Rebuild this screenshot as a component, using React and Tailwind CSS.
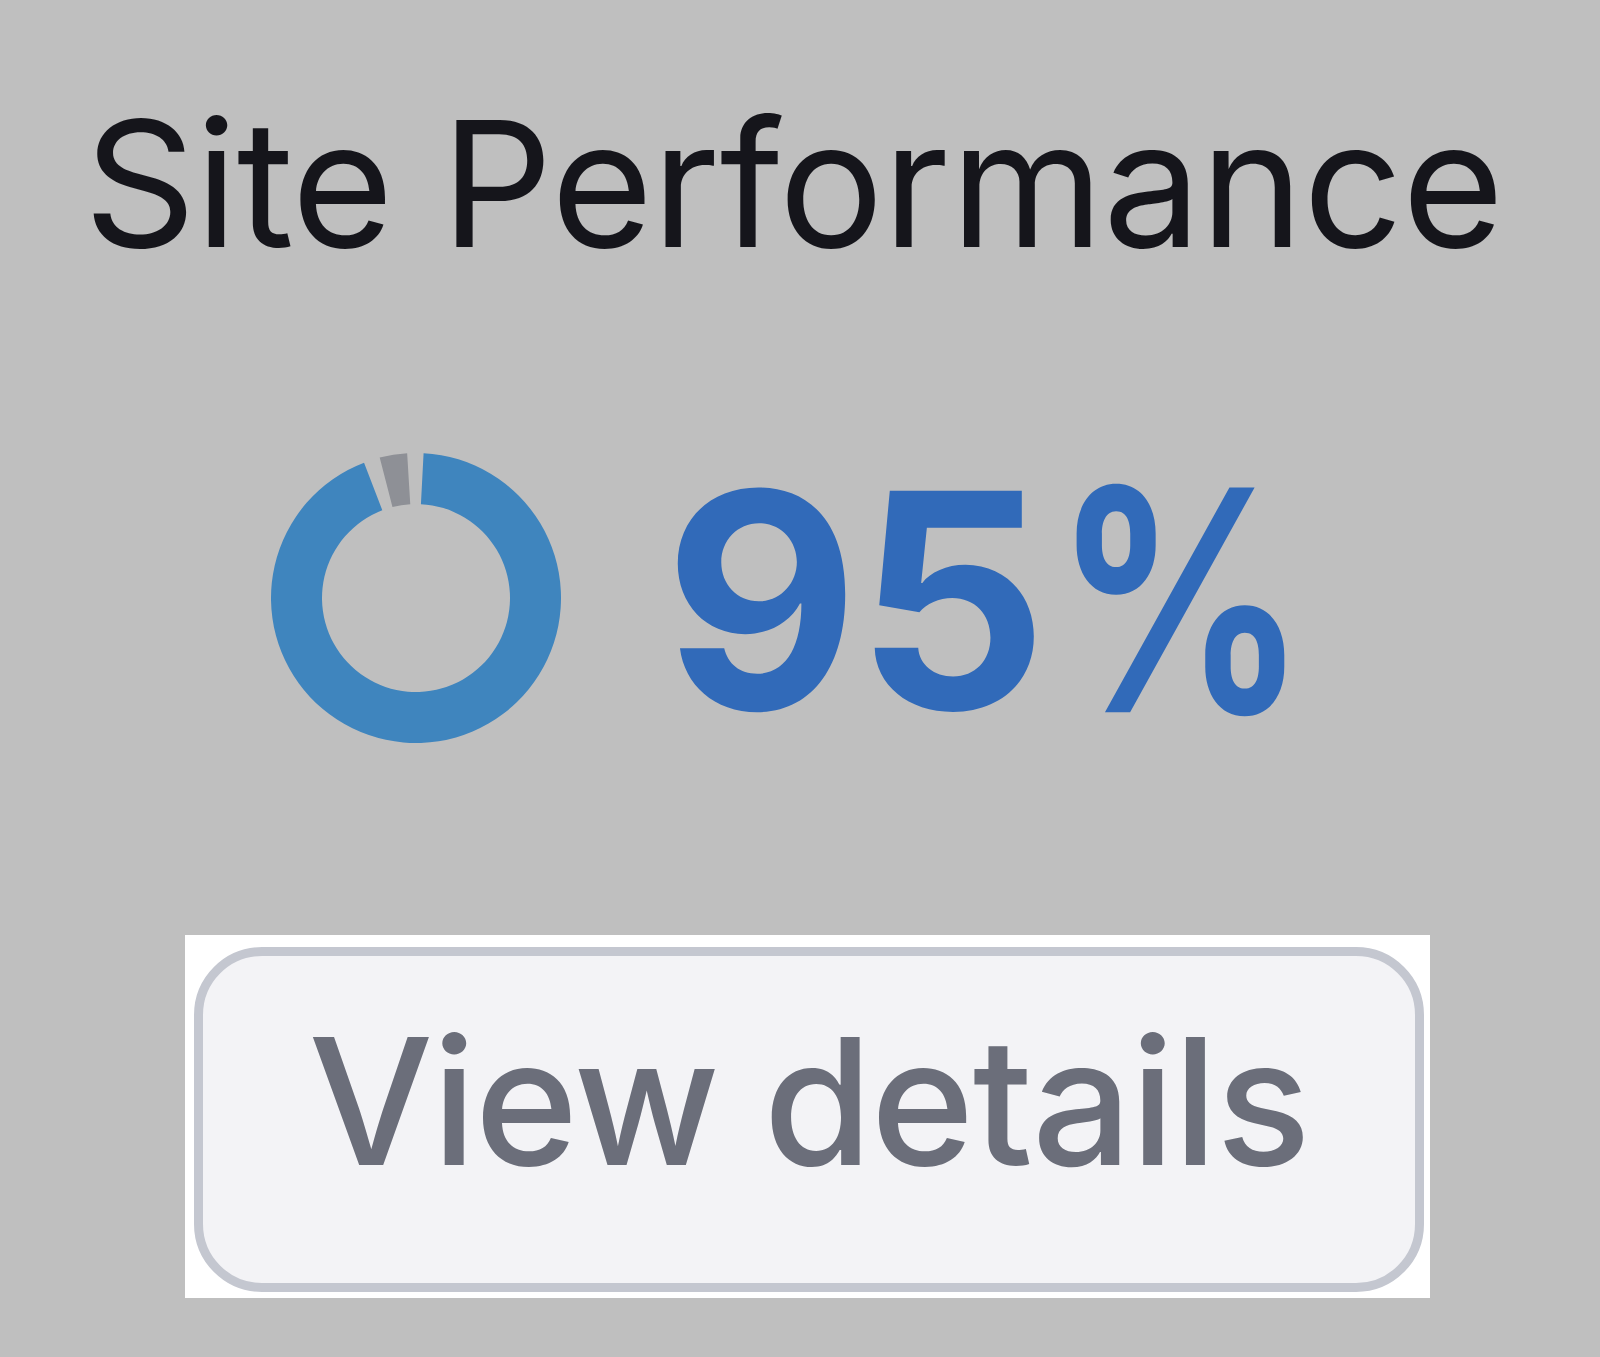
import React from "react";

function polar(cx, cy, r, deg) {
  const a = ((deg - 90) * Math.PI) / 180;
  return [cx + r * Math.cos(a), cy + r * Math.sin(a)];
}

function sector(cx, cy, r1, r2, a1, a2) {
  const [x1, y1] = polar(cx, cy, r2, a1);
  const [x2, y2] = polar(cx, cy, r2, a2);
  const [x3, y3] = polar(cx, cy, r1, a2);
  const [x4, y4] = polar(cx, cy, r1, a1);
  const large = a2 - a1 > 180 ? 1 : 0;
  return `M${x1} ${y1} A${r2} ${r2} 0 ${large} 1 ${x2} ${y2} L${x3} ${y3} A${r1} ${r1} 0 ${large} 0 ${x4} ${y4} Z`;
}

function Donut() {
  const c = 145;
  return (
    <svg width="290" height="290" viewBox="0 0 290 290" className="mt-[3px] shrink-0">
      <path d={sector(c, c, 94, 145, 3, 339)} fill="#3f85be" />
      <path d={sector(c, c, 94, 145, 345.5, 356.5)} fill="#8e9096" />
    </svg>
  );
}

export default function App() {
  return (
    <div
      className="w-[1600px] h-[1357px] bg-[#bfbfbf] flex flex-col items-center overflow-hidden"
      style={{ fontFamily: "Inter, 'Noto Sans', sans-serif" }}
    >
      <h1 className="mt-[96px] pr-[13px] text-[175px] leading-none font-normal tracking-[-0.85px] text-[#15151b] whitespace-nowrap">
        Site Performance
      </h1>
      <div className="mt-[179px] self-start ml-[271px] flex items-start gap-[103px]">
        <Donut />
        <span className="text-[300px] leading-none font-bold tracking-[-3px] text-[#316ab9] whitespace-nowrap">
          95<span className="inline-block ml-[9px] origin-left scale-x-[0.83] scale-y-[1.03]">%</span>
        </span>
      </div>
      <div className="mt-[185px] self-start ml-[185px] bg-white pt-[12px] pl-[9px] pr-[6px] pb-[6px]">
        <button className="w-[1230px] h-[345px] border-[9px] border-[#c4c7d0] rounded-[68px] bg-[#f3f3f6] flex justify-center items-start pt-[57px]">
          <span className="text-[176px] leading-none font-medium tracking-[-1.5px] text-[#6b6e7a] whitespace-nowrap">
            View details
          </span>
        </button>
      </div>
    </div>
  );
}
